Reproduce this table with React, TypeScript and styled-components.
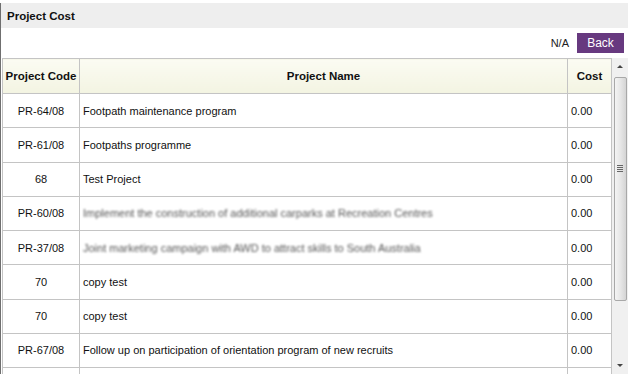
import styled, { createGlobalStyle } from "styled-components";

const GlobalStyle = createGlobalStyle`
  html, body {
    margin: 0;
    padding: 0;
    background: #ffffff;
    font-family: "Liberation Sans", Arial, sans-serif;
    overflow: hidden;
  }
`;

type Project = {
  code: string;
  name: string;
  cost: string;
  hidden?: boolean;
};

const projects: Project[] = [
  { code: "PR-64/08", name: "Footpath maintenance program", cost: "0.00" },
  { code: "PR-61/08", name: "Footpaths programme", cost: "0.00" },
  { code: "68", name: "Test Project", cost: "0.00" },
  {
    code: "PR-60/08",
    name: "Implement the construction of additional carparks at Recreation Centres",
    cost: "0.00",
    hidden: true,
  },
  {
    code: "PR-37/08",
    name: "Joint marketing campaign with AWD to attract skills to South Australia",
    cost: "0.00",
    hidden: true,
  },
  { code: "70", name: "copy test", cost: "0.00" },
  { code: "70", name: "copy test", cost: "0.00" },
  {
    code: "PR-67/08",
    name: "Follow up on participation of orientation program of new recruits",
    cost: "0.00",
  },
  { code: "", name: "", cost: "" },
];

const Page = styled.div`
  margin-top: 3px;
  height: 371px;
  border-left: 1px solid #6f6f6f;
  display: flex;
  flex-direction: column;
`;

const TitleBar = styled.div`
  height: 25px;
  background: #eeeeee;
  display: flex;
  align-items: center;
  padding-left: 6px;
  font-size: 11.5px;
  font-weight: bold;
  color: #111;
`;

const Toolbar = styled.div`
  height: 30px;
  display: flex;
  align-items: center;
  justify-content: flex-end;
  gap: 8px;
  padding-right: 4px;
  font-size: 11px;
  color: #222;
`;

const BackButton = styled.button`
  height: 20px;
  width: 47px;
  border: none;
  background: #67397f;
  color: #ffffff;
  font-family: inherit;
  font-size: 12px;
  padding: 0;
  cursor: pointer;
`;

const GridArea = styled.div`
  flex: 1;
  display: flex;
  padding-left: 1px;
  overflow: hidden;
`;

const TableWrap = styled.div`
  flex: 1;
  overflow: hidden;
`;

const Table = styled.table`
  width: 100%;
  border-collapse: collapse;
  table-layout: fixed;
  font-size: 11px;
  color: #111;
`;

const HeadCell = styled.th<{ $width?: number }>`
  box-sizing: border-box;
  ${(p) => (p.$width ? `width: ${p.$width}px;` : "")}
  height: 35px;
  padding: 0 2px;
  border: 1px solid #c4c4c4;
  background: linear-gradient(#fbfbf3, #f3f4e2);
  font-size: 11.5px;
  font-weight: bold;
  text-align: center;
  white-space: nowrap;
`;

const Cell = styled.td<{ $align?: "left" | "center" }>`
  box-sizing: border-box;
  height: 34.25px;
  padding: 0 3px;
  border: 1px solid #c4c4c4;
  text-align: ${(p) => p.$align ?? "left"};
  white-space: nowrap;
  overflow: hidden;
`;

const Masked = styled.span<{ $hidden?: boolean }>`
  display: inline-block;
  ${(p) => (p.$hidden ? "color: #555; filter: blur(0.9px);" : "")}
`;

const Scrollbar = styled.div`
  width: 16px;
  background: #f0f0f0;
  display: flex;
  flex-direction: column;
  align-items: center;
`;

const Arrow = styled.div<{ $down?: boolean }>`
  height: 17px;
  width: 16px;
  display: flex;
  align-items: center;
  justify-content: center;
  &::after {
    content: "";
    border-left: 3px solid transparent;
    border-right: 3px solid transparent;
    ${(p) =>
      p.$down ? "border-top: 3px solid #444;" : "border-bottom: 3px solid #444;"}
  }
`;

const Thumb = styled.div`
  margin-top: 2px;
  width: 13px;
  height: 224px;
  box-sizing: border-box;
  border: 1px solid #a8a8a8;
  border-radius: 2px;
  background: linear-gradient(to right, #f4f4f4, #e6e6e6 50%, #d4d4d4);
  display: flex;
  align-items: center;
  justify-content: center;
`;

const Grip = styled.div`
  width: 6px;
  height: 7px;
  background: repeating-linear-gradient(
    to bottom,
    #666 0,
    #666 1px,
    transparent 1px,
    transparent 2px
  );
  margin-bottom: 42px;
`;

const Track = styled.div`
  flex: 1;
`;

export default function App() {
  return (
    <>
      <GlobalStyle />
      <Page>
        <TitleBar>Project Cost</TitleBar>
        <Toolbar>
          <span>N/A</span>
          <BackButton>Back</BackButton>
        </Toolbar>
        <GridArea>
          <TableWrap>
            <Table>
              <thead>
                <tr>
                  <HeadCell $width={77}>Project Code</HeadCell>
                  <HeadCell>Project Name</HeadCell>
                  <HeadCell $width={44}>Cost</HeadCell>
                </tr>
              </thead>
              <tbody>
                {projects.map((p, i) => (
                  <tr key={i}>
                    <Cell $align="center">{p.code}</Cell>
                    <Cell>
                      <Masked $hidden={p.hidden}>{p.name}</Masked>
                    </Cell>
                    <Cell>{p.cost}</Cell>
                  </tr>
                ))}
              </tbody>
            </Table>
          </TableWrap>
          <Scrollbar>
            <Arrow />
            <Thumb>
              <Grip />
            </Thumb>
            <Track />
            <Arrow $down />
          </Scrollbar>
        </GridArea>
      </Page>
    </>
  );
}
